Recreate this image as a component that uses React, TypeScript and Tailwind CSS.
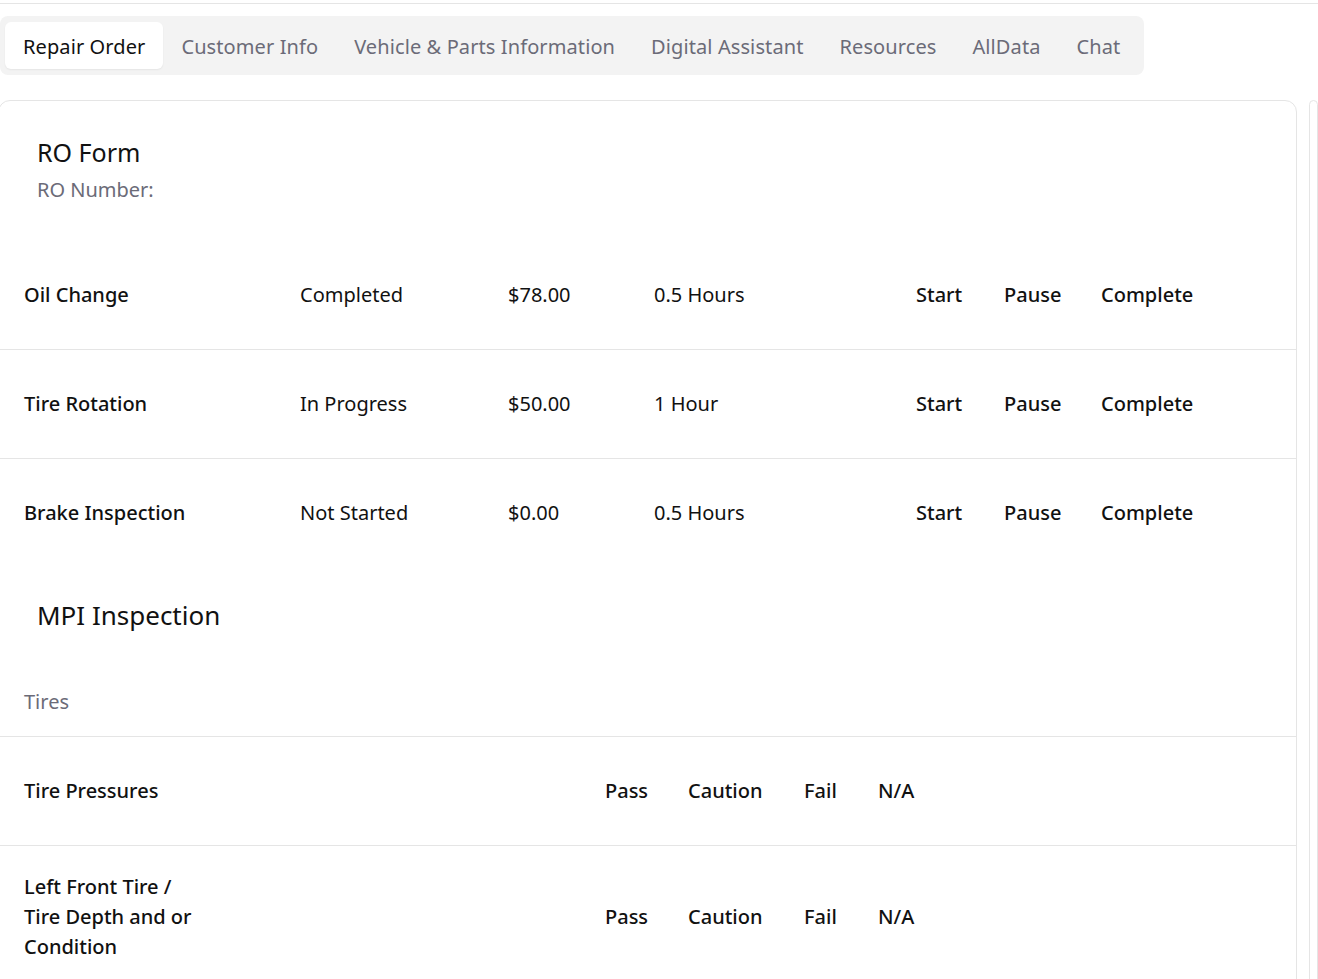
import React from "react";

const font = { fontFamily: '"Noto Sans", "Open Sans", sans-serif' };

const tabs = ["Repair Order", "Customer Info", "Vehicle & Parts Information", "Digital Assistant", "Resources", "AllData", "Chat"];

const roRows = [
  { name: "Oil Change", status: "Completed", price: "$78.00", time: "0.5 Hours" },
  { name: "Tire Rotation", status: "In Progress", price: "$50.00", time: "1 Hour" },
  { name: "Brake Inspection", status: "Not Started", price: "$0.00", time: "0.5 Hours" },
];

function RoRow({ r, last }: { r: (typeof roRows)[number]; last: boolean }) {
  return (
    <div className={`flex items-center pl-[25px] pr-[24px] py-[26px] ${last ? "" : "border-b border-[#e5e5e5]"}`}>
      <div className="flex min-h-[56px] w-full items-center text-[20px] leading-[30px] text-[#111]">
        <div className="w-[276px] shrink-0 font-medium">{r.name}</div>
        <div className="w-[208px] shrink-0">{r.status}</div>
        <div className="w-[146px] shrink-0">{r.price}</div>
        <div className="w-[262px] shrink-0">{r.time}</div>
        <div className="w-[88px] shrink-0 font-medium">Start</div>
        <div className="w-[97px] shrink-0 font-medium">Pause</div>
        <div className="shrink-0 font-medium">Complete</div>
      </div>
    </div>
  );
}

function MpiRow({ lines, last }: { lines: string[]; last?: boolean }) {
  return (
    <div className={`flex items-center pl-[25px] pr-[24px] py-[26px] ${last ? "" : "border-b border-[#e5e5e5]"}`}>
      <div className="flex min-h-[56px] w-full items-center text-[20px] leading-[30px] text-[#111]">
        <div className="w-[581px] shrink-0 font-medium">
          {lines.map((l) => (
            <div key={l}>{l}</div>
          ))}
        </div>
        <div className="w-[83px] shrink-0 font-medium">Pass</div>
        <div className="w-[116px] shrink-0 font-medium">Caution</div>
        <div className="w-[74px] shrink-0 font-medium">Fail</div>
        <div className="shrink-0 font-medium">N/A</div>
      </div>
    </div>
  );
}

export default function App() {
  return (
    <div className="min-h-[979px] w-[1318px] overflow-hidden bg-white" style={font}>
      <div className="h-[4px] border-b border-[#e5e5e5]" />
      <div className="mt-[12px] flex">
        <div className="flex items-center rounded-[8px] bg-[#f3f3f3] py-[6px] pl-[5px] pr-[6px]">
          {tabs.map((t, i) => (
            <div
              key={t}
              className={`px-[18px] pb-[7px] pt-[9px] text-[20px] leading-[31px] tracking-[0.1px] ${
                i === 0 ? "rounded-[6px] bg-white text-[#111] shadow-[0_1px_2px_rgba(0,0,0,0.06)]" : "text-[#6b6b78]"
              }`}
            >
              {t}
            </div>
          ))}
        </div>
      </div>
      <div className="-ml-[2px] mt-[25px] flex gap-[12px]">
        <div className="w-[1299px] shrink-0 rounded-[12px] border border-[#e5e5e5]">
          <div className="pl-[38px] pr-[36px] pb-[37px] pt-[35px]">
            <div className="text-[25px] leading-[32px] text-[#111]">RO Form</div>
            <div className="mt-[8px] text-[20px] leading-[28px] text-[#6b6b78]">RO Number:</div>
          </div>
          {roRows.map((r, i) => (
            <RoRow key={r.name} r={r} last={i === roRows.length - 1} />
          ))}
          <div className="pl-[38px] pr-[36px] pt-[30px]">
            <div className="text-[26px] leading-[36px] text-[#111]">MPI Inspection</div>
          </div>
          <div className="border-b border-[#e5e5e5] pl-[25px] pr-[24px] pb-[20px] pt-[55px] text-[20px] leading-[28px] text-[#6b6b78]">
            Tires
          </div>
          <MpiRow lines={["Tire Pressures"]} />
          <MpiRow lines={["Left Front Tire /", "Tire Depth and or", "Condition"]} last />
        </div>
        <div className="h-[900px] flex-1 rounded-[12px] border border-[#e5e5e5]" />
      </div>
    </div>
  );
}
